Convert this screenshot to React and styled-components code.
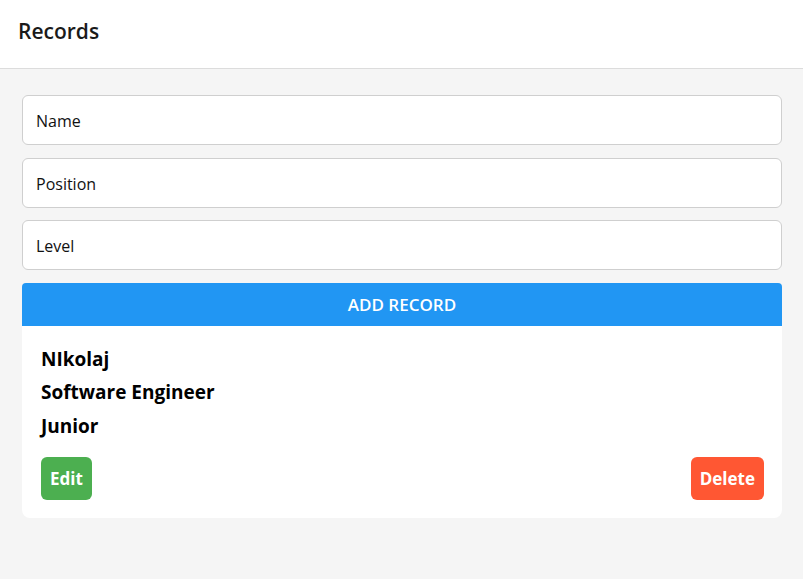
import React from "react";
import styled, { createGlobalStyle } from "styled-components";

const GlobalStyle = createGlobalStyle`
  body {
    margin: 0;
    background: #f5f5f5;
    font-family: "Open Sans", "Noto Sans", sans-serif;
  }
`;

const Header = styled.header`
  height: 69px;
  box-sizing: border-box;
  background: #fff;
  border-bottom: 1px solid #dcdcdc;
  display: flex;
  align-items: center;
  padding: 0 18px 7px;
  h1 {
    margin: 0;
    font-size: 21px;
    font-weight: 600;
    color: #1a1a1a;
  }
`;

const Main = styled.main`
  padding: 26px 21px 26px 22px;
  display: flex;
  flex-direction: column;
`;

const Input = styled.input`
  height: 50px;
  box-sizing: border-box;
  border: 1px solid #cfcfcf;
  border-radius: 6px;
  padding: 2px 13px 0;
  font-family: inherit;
  font-size: 16px;
  background: #fff;
  margin-bottom: 12.5px;
  &::placeholder {
    color: #111;
  }
`;

const AddButton = styled.button`
  height: 43px;
  border: none;
  border-radius: 4px 4px 0 0;
  background: #2196f3;
  color: #fff;
  font-family: inherit;
  font-size: 17px;
  font-weight: 600;
  cursor: pointer;
`;

const Card = styled.div`
  background: #fff;
  border-radius: 0 0 8px 8px;
  padding: 17px 18px 18px 19px;
`;

const Line = styled.p`
  margin: 0;
  font-size: 19px;
  font-weight: 700;
  line-height: 33.5px;
  color: #000;
`;

const Actions = styled.div`
  display: flex;
  justify-content: space-between;
  margin-top: 14px;
`;

const ActionButton = styled.button`
  height: 43px;
  padding: 0 9px;
  border: none;
  border-radius: 6px;
  background: ${(p) => (p.$danger ? "#ff5733" : "#4caf50")};
  color: #fff;
  font-family: inherit;
  font-size: 17px;
  font-weight: 700;
  cursor: pointer;
`;

export default function App() {
  const record = { name: "NIkolaj", position: "Software Engineer", level: "Junior" };
  return (
    <>
      <GlobalStyle />
      <Header>
        <h1>Records</h1>
      </Header>
      <Main>
        <Input placeholder="Name" />
        <Input placeholder="Position" />
        <Input placeholder="Level" />
        <AddButton>ADD RECORD</AddButton>
        <Card>
          <Line>{record.name}</Line>
          <Line>{record.position}</Line>
          <Line>{record.level}</Line>
          <Actions>
            <ActionButton>Edit</ActionButton>
            <ActionButton $danger>Delete</ActionButton>
          </Actions>
        </Card>
      </Main>
    </>
  );
}
